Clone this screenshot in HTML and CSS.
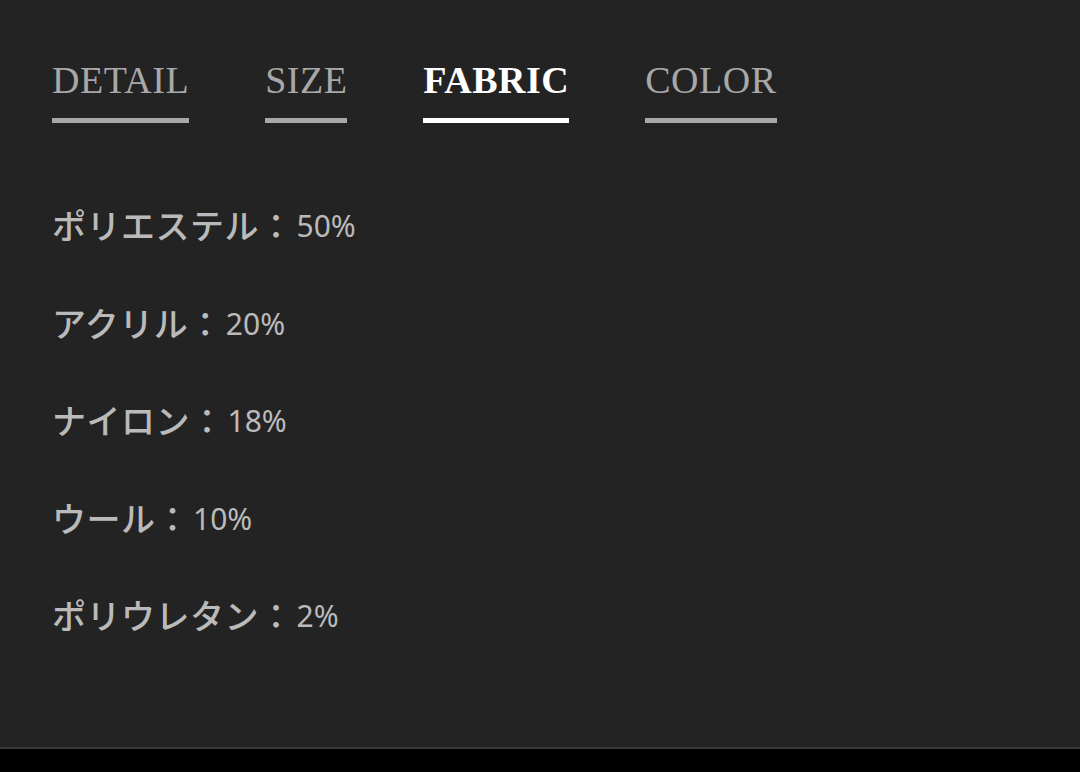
FILE: index.html
```html
<!DOCTYPE html>
<html lang="ja">
<head>
<meta charset="utf-8">
<link rel="stylesheet" href="styles.css">
</head>
<body>
<div class="page">
  <nav class="tabs">
    <div class="tab"><span class="tab-label">DETAIL</span><span class="tab-bar"></span></div>
    <div class="tab"><span class="tab-label">SIZE</span><span class="tab-bar"></span></div>
    <div class="tab active"><span class="tab-label">FABRIC</span><span class="tab-bar"></span></div>
    <div class="tab"><span class="tab-label">COLOR</span><span class="tab-bar"></span></div>
  </nav>
  <ul class="fabric-list">
    <li class="fabric-row"><span class="name">ポリエステル：</span><span class="pct">50%</span></li>
    <li class="fabric-row"><span class="name">アクリル：</span><span class="pct">20%</span></li>
    <li class="fabric-row"><span class="name">ナイロン：</span><span class="pct">18%</span></li>
    <li class="fabric-row"><span class="name">ウール：</span><span class="pct">10%</span></li>
    <li class="fabric-row"><span class="name">ポリウレタン：</span><span class="pct">2%</span></li>
  </ul>
</div>
<footer class="bottom-bar"></footer>
</body>
</html>
```
FILE: styles.css
```css
html, body {
  margin: 0;
  padding: 0;
  height: 100%;
  background: #000;
}
body {
  display: flex;
  flex-direction: column;
}
.page {
  height: 749px;
  flex: none;
  background: #232323;
  border-bottom: 2px solid #393939;
  box-sizing: border-box;
  padding: 61px 0 0 52px;
}
.tabs {
  display: flex;
  gap: 76px;
}
.tab {
  display: flex;
  flex-direction: column;
  gap: 19px;
}
.tab-label {
  font-family: "Liberation Serif", "Times New Roman", serif;
  font-size: 38px;
  line-height: 38px;
  letter-spacing: 0.5px;
  color: #a8a8a8;
}
.tab-bar {
  display: block;
  height: 5px;
  background: #a8a8a8;
}
.tab.active .tab-label {
  color: #fff;
  font-weight: bold;
}
.tab.active .tab-bar {
  background: #fff;
}
.fabric-list {
  list-style: none;
  margin: 82px 0 0;
  padding: 0;
  display: flex;
  flex-direction: column;
  gap: 57.5px;
}
.fabric-row {
  height: 40px;
  display: flex;
  align-items: center;
  color: #bababa;
}
.name {
  font-family: "Noto Sans CJK JP", sans-serif;
  font-size: 34px;
  font-weight: 500;
  line-height: 40px;
  letter-spacing: 0.5px;
}
.pct {
  font-family: "Noto Sans", sans-serif;
  font-size: 30px;
  line-height: 40px;
  margin-left: 3px;
  position: relative;
  top: 1px;
}
.bottom-bar {
  flex: 1;
  background: #000;
}
```
